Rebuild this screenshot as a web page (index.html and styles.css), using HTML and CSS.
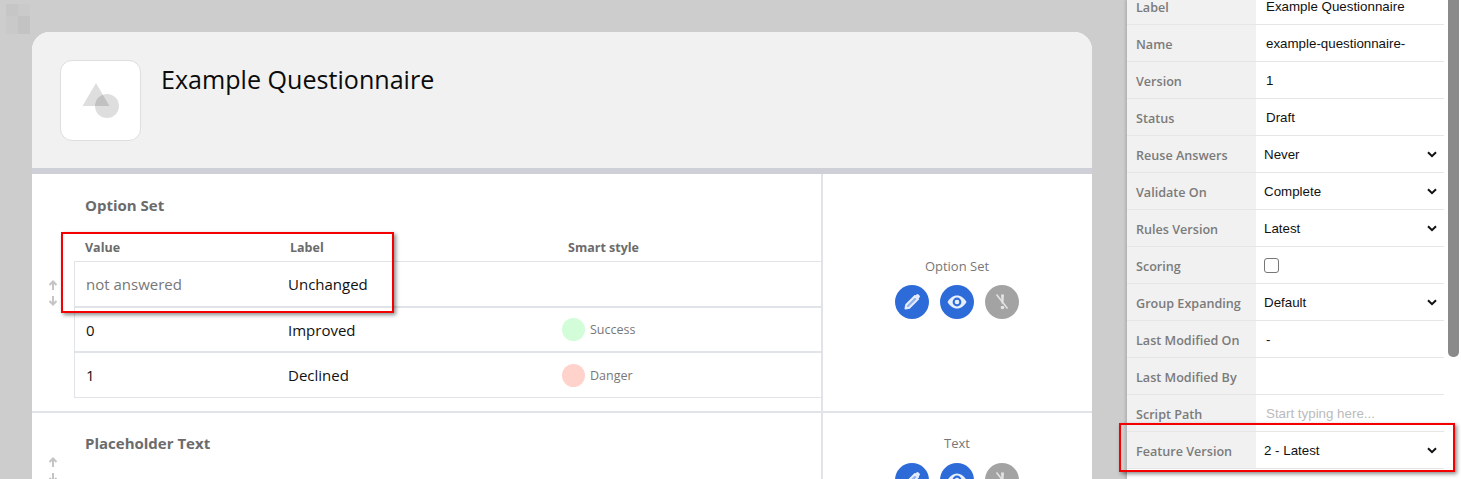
FILE: index.html
```html
<!DOCTYPE html>
<html lang="en">
<head>
    <meta charset="UTF-8">
    <title>Example Questionnaire</title>
    <link rel="stylesheet" href="styles.css">
</head>
<body>
    <svg class="ghost" width="24" height="30" viewBox="0 0 24 30">
        <rect width="12" height="12" fill="#c6c6c6"/>
        <rect x="12" width="12" height="12" fill="#cacaca"/>
        <rect y="12" width="12" height="18" fill="#c9c9c9"/>
        <rect x="12" y="12" width="12" height="18" fill="#c3c3c3"/>
    </svg>

    <main class="canvas">
        <div class="card">
            <header class="card-head">
                <div class="logo">
                    <svg width="54" height="54" viewBox="0 0 54 54">
                        <path d="M22 9 L35.500 32 H8.500 Z" fill="#000" fill-opacity="0.13"/>
                        <circle cx="33" cy="32" r="12" fill="#000" fill-opacity="0.13"/>
                    </svg>
                </div>
                <h1>Example Questionnaire</h1>
            </header>

            <section class="item item-options">
                <div class="handle">
                    <svg width="10" height="26" viewBox="0 0 10 26"><path d="M5 10V2M1.500 5L5 1.500 8.500 5M5 16v8M1.500 21L5 24.500 8.500 21" fill="none" stroke="#c4c4c4" stroke-width="2"/></svg>
                </div>
                <div class="item-main">
                    <h3>Option Set</h3>
                    <div class="opt-head">
                        <span>Value</span>
                        <span>Label</span>
                        <span>Smart style</span>
                    </div>
                    <div class="opt-table">
                        <div class="opt-row">
                            <span class="muted">not answered</span>
                            <span>Unchanged</span>
                            <span></span>
                        </div>
                        <div class="opt-row">
                            <span>0</span>
                            <span>Improved</span>
                            <span class="style-cell"><i class="dot dot-success"></i>Success</span>
                        </div>
                        <div class="opt-row opt-row-last">
                            <span>1</span>
                            <span>Declined</span>
                            <span class="style-cell"><i class="dot dot-danger"></i>Danger</span>
                        </div>
                    </div>
                </div>
                <div class="item-side">
                    <div class="item-type">Option Set</div>
                    <div class="actions">
                        <button class="round">
                            <svg width="20" height="20" viewBox="0 0 20 20"><path d="M3.500 16.500l.8-3.800L13 4l3 3-8.700 8.700z" fill="#8fb2ee" stroke="#e6eefc" stroke-width="2" stroke-linejoin="round"/><path d="M13.500 3.500l1-1a1.400 1.400 0 0 1 2 0l1 1a1.400 1.400 0 0 1 0 2l-1 1z" fill="#e6eefc"/></svg>
                        </button>
                        <button class="round">
                            <svg width="22" height="20" viewBox="0 0 22 20"><path d="M1.500 10c2.500-4 5.500-6.500 9.500-6.500s7 2.500 9.500 6.500c-2.500 4-5.500 6.500-9.500 6.500s-7-2.500-9.500-6.500z" fill="#e8effc"/><circle cx="11" cy="10" r="4.400" fill="#2d6bd9"/><circle cx="11" cy="10" r="2.300" fill="#e8effc"/></svg>
                        </button>
                        <button class="round round-off">
                            <svg width="20" height="20" viewBox="0 0 20 20"><path d="M4.500 2.500L15.500 16.500" stroke="#e4e4e4" stroke-width="1.500"/><path d="M9 2.500h3l-.6 9H9.600z" fill="#e4e4e4"/><circle cx="10.500" cy="15.500" r="1.800" fill="#e4e4e4"/></svg>
                        </button>
                    </div>
                </div>
            </section>

            <section class="item item-text">
                <div class="handle">
                    <svg width="10" height="26" viewBox="0 0 10 26"><path d="M5 10V2M1.500 5L5 1.500 8.500 5M5 16v8M1.500 21L5 24.500 8.500 21" fill="none" stroke="#c4c4c4" stroke-width="2"/></svg>
                </div>
                <div class="item-main">
                    <h3>Placeholder Text</h3>
                </div>
                <div class="item-side">
                    <div class="item-type">Text</div>
                    <div class="actions">
                        <button class="round">
                            <svg width="20" height="20" viewBox="0 0 20 20"><path d="M3.500 16.500l.8-3.800L13 4l3 3-8.700 8.700z" fill="#8fb2ee" stroke="#e6eefc" stroke-width="2" stroke-linejoin="round"/><path d="M13.500 3.500l1-1a1.400 1.400 0 0 1 2 0l1 1a1.400 1.400 0 0 1 0 2l-1 1z" fill="#e6eefc"/></svg>
                        </button>
                        <button class="round">
                            <svg width="22" height="20" viewBox="0 0 22 20"><path d="M1.500 10c2.500-4 5.500-6.500 9.500-6.500s7 2.500 9.500 6.500c-2.500 4-5.500 6.500-9.500 6.500s-7-2.500-9.500-6.500z" fill="#e8effc"/><circle cx="11" cy="10" r="4.400" fill="#2d6bd9"/><circle cx="11" cy="10" r="2.300" fill="#e8effc"/></svg>
                        </button>
                        <button class="round round-off">
                            <svg width="20" height="20" viewBox="0 0 20 20"><path d="M4.500 2.500L15.500 16.500" stroke="#e4e4e4" stroke-width="1.500"/><path d="M9 2.500h3l-.6 9H9.600z" fill="#e4e4e4"/><circle cx="10.500" cy="15.500" r="1.800" fill="#e4e4e4"/></svg>
                        </button>
                    </div>
                </div>
            </section>
        </div>
    </main>

    <aside class="panel">
        <div class="props">
            <div class="prop"><label>Label</label><div class="val">Example Questionnaire</div></div>
            <div class="prop"><label>Name</label><div class="val">example-questionnaire-</div></div>
            <div class="prop"><label>Version</label><div class="val">1</div></div>
            <div class="prop"><label>Status</label><div class="val">Draft</div></div>
            <div class="prop"><label>Reuse Answers</label><div class="val val-select">Never<svg class="chev" width="10" height="7" viewBox="0 0 10 7"><path d="M1 1.200l4 4 4-4" fill="none" stroke="#111" stroke-width="2"/></svg></div></div>
            <div class="prop"><label>Validate On</label><div class="val val-select">Complete<svg class="chev" width="10" height="7" viewBox="0 0 10 7"><path d="M1 1.200l4 4 4-4" fill="none" stroke="#111" stroke-width="2"/></svg></div></div>
            <div class="prop"><label>Rules Version</label><div class="val val-select">Latest<svg class="chev" width="10" height="7" viewBox="0 0 10 7"><path d="M1 1.200l4 4 4-4" fill="none" stroke="#111" stroke-width="2"/></svg></div></div>
            <div class="prop"><label>Scoring</label><div class="val val-select"><span class="check"></span></div></div>
            <div class="prop"><label>Group Expanding</label><div class="val val-select">Default<svg class="chev" width="10" height="7" viewBox="0 0 10 7"><path d="M1 1.200l4 4 4-4" fill="none" stroke="#111" stroke-width="2"/></svg></div></div>
            <div class="prop"><label>Last Modified On</label><div class="val">-</div></div>
            <div class="prop"><label>Last Modified By</label><div class="val"></div></div>
            <div class="prop"><label>Script Path</label><div class="val placeholder">Start typing here...</div></div>
            <div class="prop"><label>Feature Version</label><div class="val val-select">2 - Latest<svg class="chev" width="10" height="7" viewBox="0 0 10 7"><path d="M1 1.200l4 4 4-4" fill="none" stroke="#111" stroke-width="2"/></svg></div></div>
        </div>
        <div class="scroll-track"><div class="scroll-thumb"></div></div>
    </aside>

    <div class="callout callout-table"></div>
    <div class="callout callout-feature"></div>
</body>
</html>
```

FILE: styles.css
```css
* {
    box-sizing: border-box;
}
html, body {
    height: 479px;
    overflow: hidden;
}
body {
    margin: 0;
    display: flex;
    align-items: flex-start;
    background: #cdcdcd;
    font-family: 'Open Sans', sans-serif;
    color: #111;
}
.ghost {
    position: absolute;
    left: 6px;
    top: 4px;
}
.canvas {
    width: 1127px;
    padding: 32px 35px 0 32px;
    flex: none;
}
.card {
    border-radius: 18px 18px 0 0;
    background: #fff;
    overflow: hidden;
}
.card-head {
    display: flex;
    gap: 20px;
    height: 142px;
    padding: 28px;
    background: #f1f1f1;
    border-bottom: 6px solid #cfcfd8;
}
.logo {
    width: 81px;
    height: 81px;
    flex: none;
    display: flex;
    align-items: center;
    justify-content: center;
    background: #fff;
    border: 1px solid #dedede;
    border-radius: 12px;
}
.card-head h1 {
    margin: 0;
    padding-top: 1px;
    font-size: 25.1px;
    line-height: 36px;
    font-weight: 400;
    color: #0b0b0b;
}
.item {
    display: flex;
    border-bottom: 2px solid #e0e3e8;
}
.item-options {
    height: 239px;
}
.item-text {
    height: 116px;
}
.handle {
    width: 42px;
    flex: none;
    display: flex;
    align-items: center;
    justify-content: center;
}
.item-main {
    width: 747px;
    flex: none;
    padding-top: 21px;
}
.item-main h3 {
    margin: 0 0 0 11px;
    font-size: 15px;
    line-height: 20px;
    font-weight: 700;
    color: #6b6b6b;
}
.item-text .item-main {
    padding-top: 20px;
}
.opt-head {
    display: grid;
    grid-template-columns: 205px 278px 1fr;
    height: 46px;
    padding: 23px 0 0 11px;
    font-size: 12.500px;
    line-height: 20px;
    font-weight: 700;
    color: #6b6b6b;
}
.opt-table {
    border-left: 1px solid #e0e3e8;
    border-top: 1px solid #e0e3e8;
}
.opt-row {
    display: grid;
    grid-template-columns: 202px 274px 1fr;
    align-items: center;
    height: 45px;
    padding-left: 11px;
    font-size: 15px;
    border-bottom: 2px solid #e0e3e8;
}
.opt-row:nth-child(1) {
    height: 46px;
}
.opt-row-last {
    border-bottom-width: 1px;
}
.muted {
    color: #777;
}
.style-cell {
    display: flex;
    align-items: center;
    gap: 5px;
    font-size: 12.500px;
    color: #777;
}
.dot {
    width: 23px;
    height: 23px;
    border-radius: 50%;
}
.dot-success {
    background: #d3fdd9;
}
.dot-danger {
    background: #ffd2cc;
}
.item-side {
    flex: 1;
    border-left: 2px solid #e0e3e8;
    padding: 0 1px 8px 0;
    display: flex;
    flex-direction: column;
    align-items: center;
    justify-content: center;
}
.item-text .item-side {
    justify-content: flex-start;
    padding-top: 22px;
    padding-bottom: 0;
}
.item-type {
    font-size: 13px;
    line-height: 17px;
    margin-bottom: 10px;
    color: #777;
}
.item-text .item-type {
    margin-bottom: 11px;
}
.actions {
    display: flex;
    flex: none;
    gap: 11px;
}
.round {
    width: 34px;
    height: 34px;
    padding: 0;
    border: none;
    border-radius: 50%;
    background: #2d6bd9;
    display: flex;
    align-items: center;
    justify-content: center;
}
.round-off {
    background: #a3a3a3;
}
.panel {
    flex: 1;
    display: flex;
    height: 479px;
    background: #fff;
    box-shadow: -2px 0 2px rgba(0, 0, 0, 0.12);
}
.props {
    width: 317px;
    flex: none;
    margin-top: -12px;
}
.prop {
    display: flex;
    height: 37px;
    border-bottom: 1px solid #e6e6e6;
}
.prop label {
    width: 129px;
    flex: none;
    padding: 2px 0 0 9px;
    display: flex;
    align-items: center;
    background: #f1f1f1;
    font-size: 12.600px;
    font-weight: 600;
    color: #7b7b7b;
}
.val {
    flex: 1;
    display: flex;
    align-items: center;
    padding-left: 10px;
    padding-top: 1px;
    font-family: 'Liberation Sans', sans-serif;
    font-size: 13.333px;
    color: #111;
}
.val-select {
    justify-content: space-between;
    padding-left: 8px;
    padding-right: 7px;
    padding-top: 0;
}
.placeholder {
    color: #bbb;
}
.check {
    width: 15px;
    height: 15px;
    border: 1.500px solid #777;
    border-radius: 3px;
}
.scroll-track {
    flex: 1;
    padding-left: 4px;
}
.scroll-thumb {
    width: 11px;
    height: 357px;
    background: #8a8a8a;
    border-radius: 0 0 5px 5px;
}
.callout {
    position: absolute;
    border: 2px solid #f40000;
    box-shadow: 2px 2px 4px rgba(0, 0, 0, 0.45);
}
.callout-table {
    left: 61px;
    top: 232px;
    width: 333px;
    height: 81px;
}
.callout-feature {
    left: 1119px;
    top: 423px;
    width: 336px;
    height: 49px;
}
```
